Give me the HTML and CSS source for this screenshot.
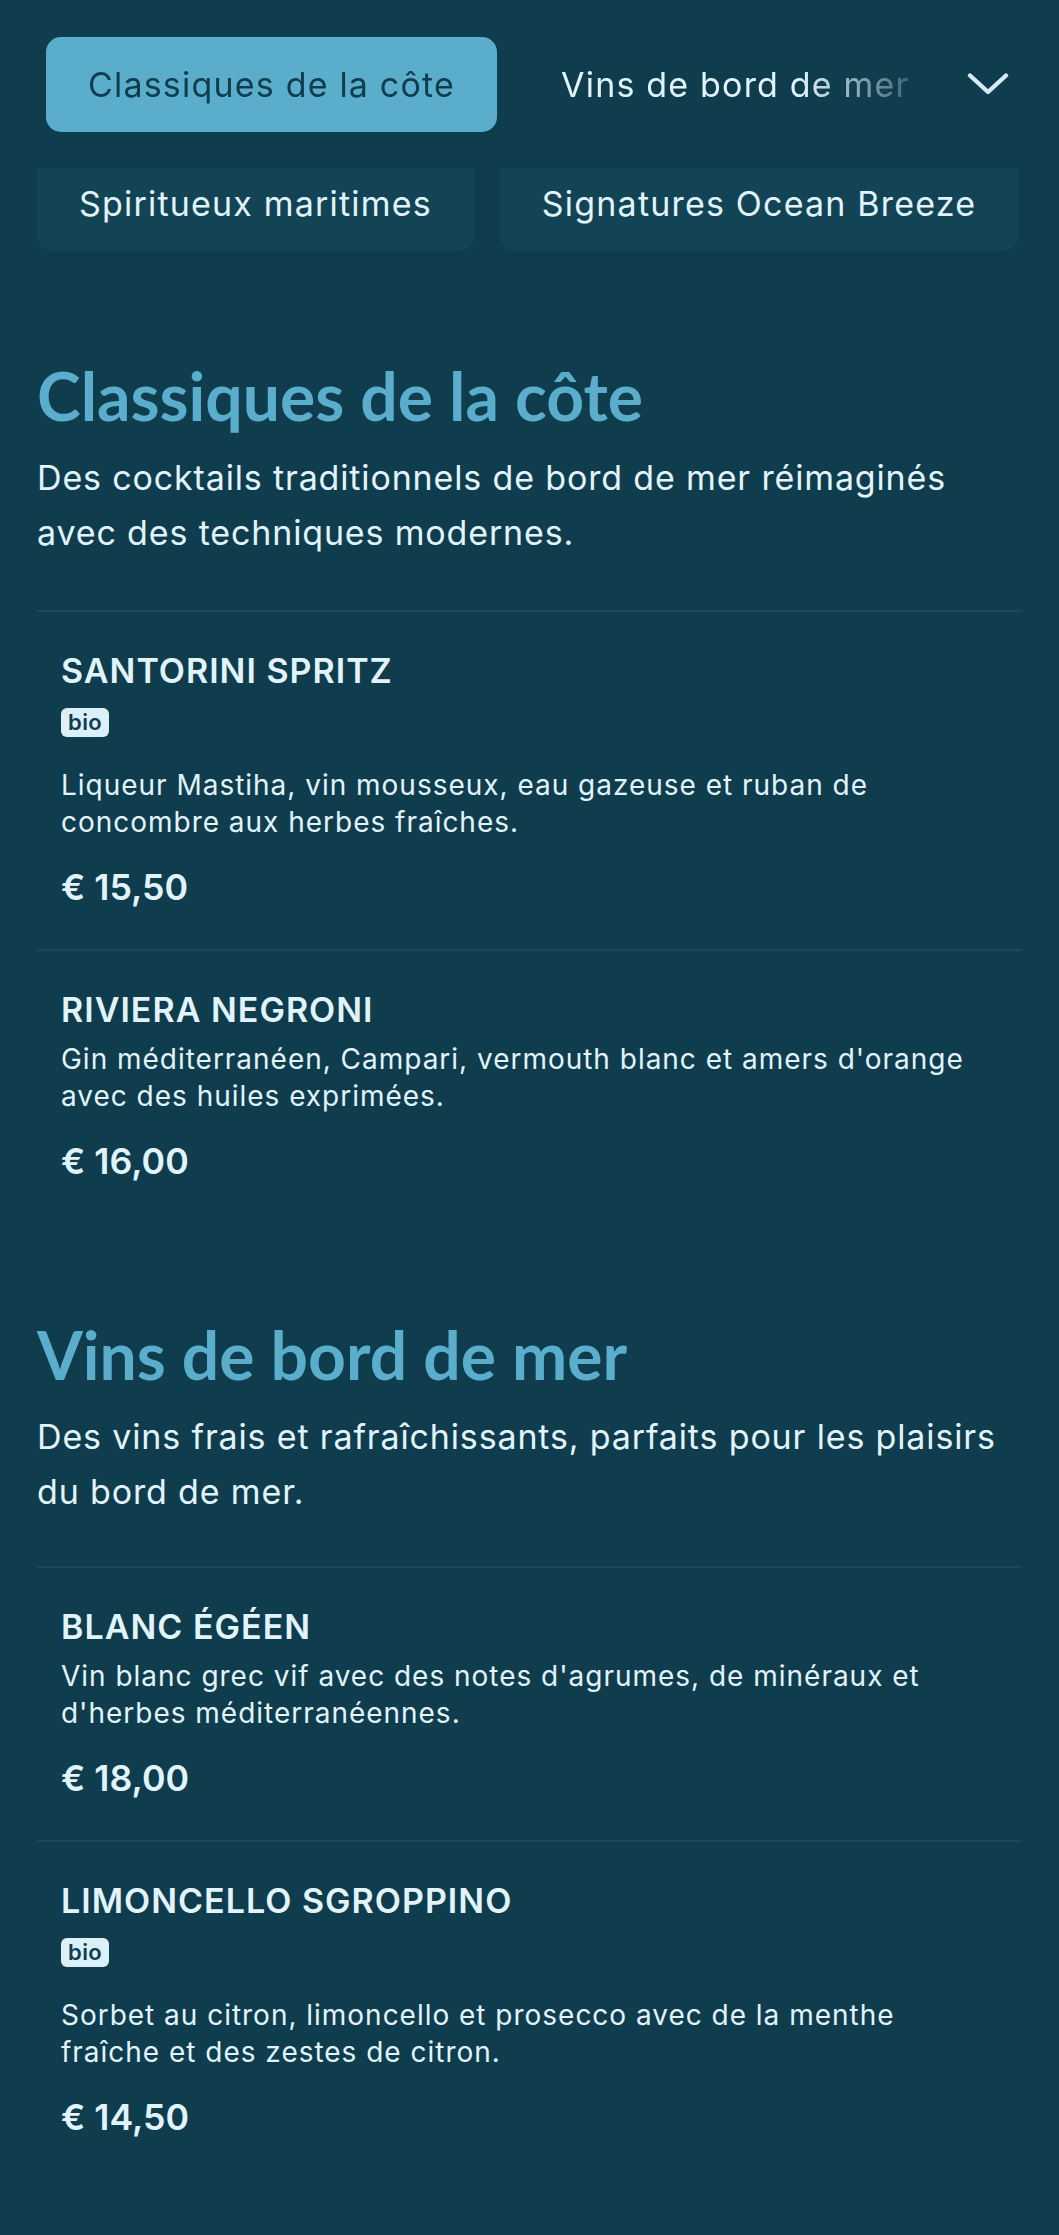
FILE: index.html
```html
<!DOCTYPE html>
<html lang="fr">
<head>
<meta charset="utf-8">
<title>Ocean Breeze – Carte</title>
<link rel="stylesheet" href="styles.css">
</head>
<body>
<header class="topbar">
  <nav class="tabs">
    <a class="tab tab-active" href="#classiques">Classiques de la côte</a>
    <a class="tab" href="#vins">Vins de bord de mer</a>
  </nav>
  <button class="toggle" type="button" aria-label="Afficher les catégories">
    <svg class="chevron" viewBox="0 0 42 24" width="42" height="24" aria-hidden="true">
      <polyline points="3,3.5 21,20 39,3.5" fill="none" stroke="currentColor" stroke-width="4.4" stroke-linecap="round" stroke-linejoin="round"/>
    </svg>
  </button>
</header>

<div class="tiles">
  <a class="tile" href="#spiritueux">Spiritueux maritimes</a>
  <a class="tile" href="#signatures">Signatures Ocean Breeze</a>
</div>

<main class="menu">
  <section class="section" id="classiques">
    <h2 class="section-title">Classiques de la côte</h2>
    <p class="section-desc">Des cocktails traditionnels de bord de mer réimaginés avec des techniques modernes.</p>
    <ul class="items">
      <li class="item">
        <h3 class="item-name">Santorini Spritz</h3>
        <div class="tags"><span class="tag">bio</span></div>
        <p class="item-desc">Liqueur Mastiha, vin mousseux, eau gazeuse et ruban de concombre aux herbes fraîches.</p>
        <p class="item-price">€ 15,50</p>
      </li>
      <li class="item">
        <h3 class="item-name">Riviera Negroni</h3>
        <p class="item-desc">Gin méditerranéen, Campari, vermouth blanc et amers d'orange avec des huiles exprimées.</p>
        <p class="item-price">€ 16,00</p>
      </li>
    </ul>
  </section>

  <section class="section" id="vins">
    <h2 class="section-title">Vins de bord de mer</h2>
    <p class="section-desc">Des vins frais et rafraîchissants, parfaits pour les plaisirs du bord de mer.</p>
    <ul class="items">
      <li class="item">
        <h3 class="item-name">Blanc Égéen</h3>
        <p class="item-desc">Vin blanc grec vif avec des notes d'agrumes, de minéraux et d'herbes méditerranéennes.</p>
        <p class="item-price">€ 18,00</p>
      </li>
      <li class="item">
        <h3 class="item-name">Limoncello Sgroppino</h3>
        <div class="tags"><span class="tag">bio</span></div>
        <p class="item-desc">Sorbet au citron, limoncello et prosecco avec de la menthe fraîche et des zestes de citron.</p>
        <p class="item-price">€ 14,50</p>
      </li>
    </ul>
  </section>
</main>
</body>
</html>
```

FILE: styles.css
```css
* { box-sizing: border-box; }

html, body {
  margin: 0;
  padding: 0;
  background: #0f3d4e;
}

body {
  font-family: "Inter", "Noto Sans", "Liberation Sans", sans-serif;
  color: #e2f4fb;
  -webkit-font-smoothing: antialiased;
}

/* ---------- top bar ---------- */
.topbar {
  position: relative;
  z-index: 2;
  display: flex;
  align-items: center;
  height: 168px;
  padding-left: 46px;
  background: #0f3d4e;
}

.tabs {
  flex: 1;
  min-width: 0;
  display: flex;
  gap: 22px;
  overflow: hidden;
  white-space: nowrap;
  -webkit-mask-image: linear-gradient(to right, #000 calc(100% - 115px), rgba(0,0,0,0.2) 100%);
  mask-image: linear-gradient(to right, #000 calc(100% - 115px), rgba(0,0,0,0.2) 100%);
}

.tab {
  flex: none;
  display: block;
  height: 95px;
  line-height: 95px;
  padding: 0 42px;
  border-radius: 15px;
  font-size: 34px;
  letter-spacing: 0.035em;
  font-weight: 400;
  color: #e2f4fb;
  text-decoration: none;
}

.tab-active {
  background: #5aaecb;
  color: #0f3d4e;
}

.toggle {
  flex: none;
  width: 145px;
  height: 95px;
  padding: 0 0 0 2px;
  border: 0;
  background: transparent;
  color: #d5ecf6;
  display: flex;
  align-items: center;
  justify-content: center;
}

.chevron { display: block; }

/* ---------- category tiles ---------- */
.tiles {
  display: flex;
  gap: 26px;
  margin-top: -12px;
  padding: 0 37px;
}

.tile {
  display: block;
  height: 95px;
  line-height: 95px;
  padding: 0 42px;
  border-radius: 15px;
  background: #134455;
  font-size: 34px;
  letter-spacing: 0.035em;
  color: #e2f4fb;
  text-decoration: none;
  white-space: nowrap;
}

/* ---------- menu ---------- */
.menu {
  padding: 105px 37px 54px;
}

.section + .section {
  margin-top: 92px;
}

.section-title {
  margin: 0;
  font-family: "Lato", "Liberation Sans", sans-serif;
  font-weight: 700;
  font-size: 66px;
  line-height: 79px;
  color: #5aaecb;
}

.section-desc {
  margin: 15px 0 0;
  font-size: 34px;
  letter-spacing: 0.025em;
  line-height: 55px;
  color: #e2f4fb;
}

.items {
  list-style: none;
  margin: 50px 0 0;
  padding: 0;
}

.section + .section .items {
  margin-top: 47px;
}

.item {
  border-top: 2px solid #184a5b;
  padding: 38px 24px 40px;
}

.item-name {
  margin: 0;
  font-size: 34px;
  letter-spacing: 0.03em;
  line-height: 41px;
  font-weight: 600;
  text-transform: uppercase;
  color: #e2f4fb;
}

.tags {
  margin-top: 17px;
  display: flex;
  gap: 10px;
}

.tag {
  display: block;
  height: 29px;
  line-height: 29px;
  padding: 0 7px;
  border-radius: 6px;
  background: #dcf0fa;
  color: #0f3d4e;
  font-size: 22px;
  letter-spacing: 0.02em;
  font-weight: 600;
}

.item-desc {
  margin: 11px 0 0;
  padding-right: 24px;
  font-size: 28px;
  letter-spacing: 0.035em;
  line-height: 37px;
  color: #e2f4fb;
}

.tags + .item-desc {
  margin-top: 30px;
}

.item-price {
  margin: 24px 0 0;
  font-size: 35.75px;
  line-height: 44px;
  font-weight: 600;
  color: #e2f4fb;
}
```
